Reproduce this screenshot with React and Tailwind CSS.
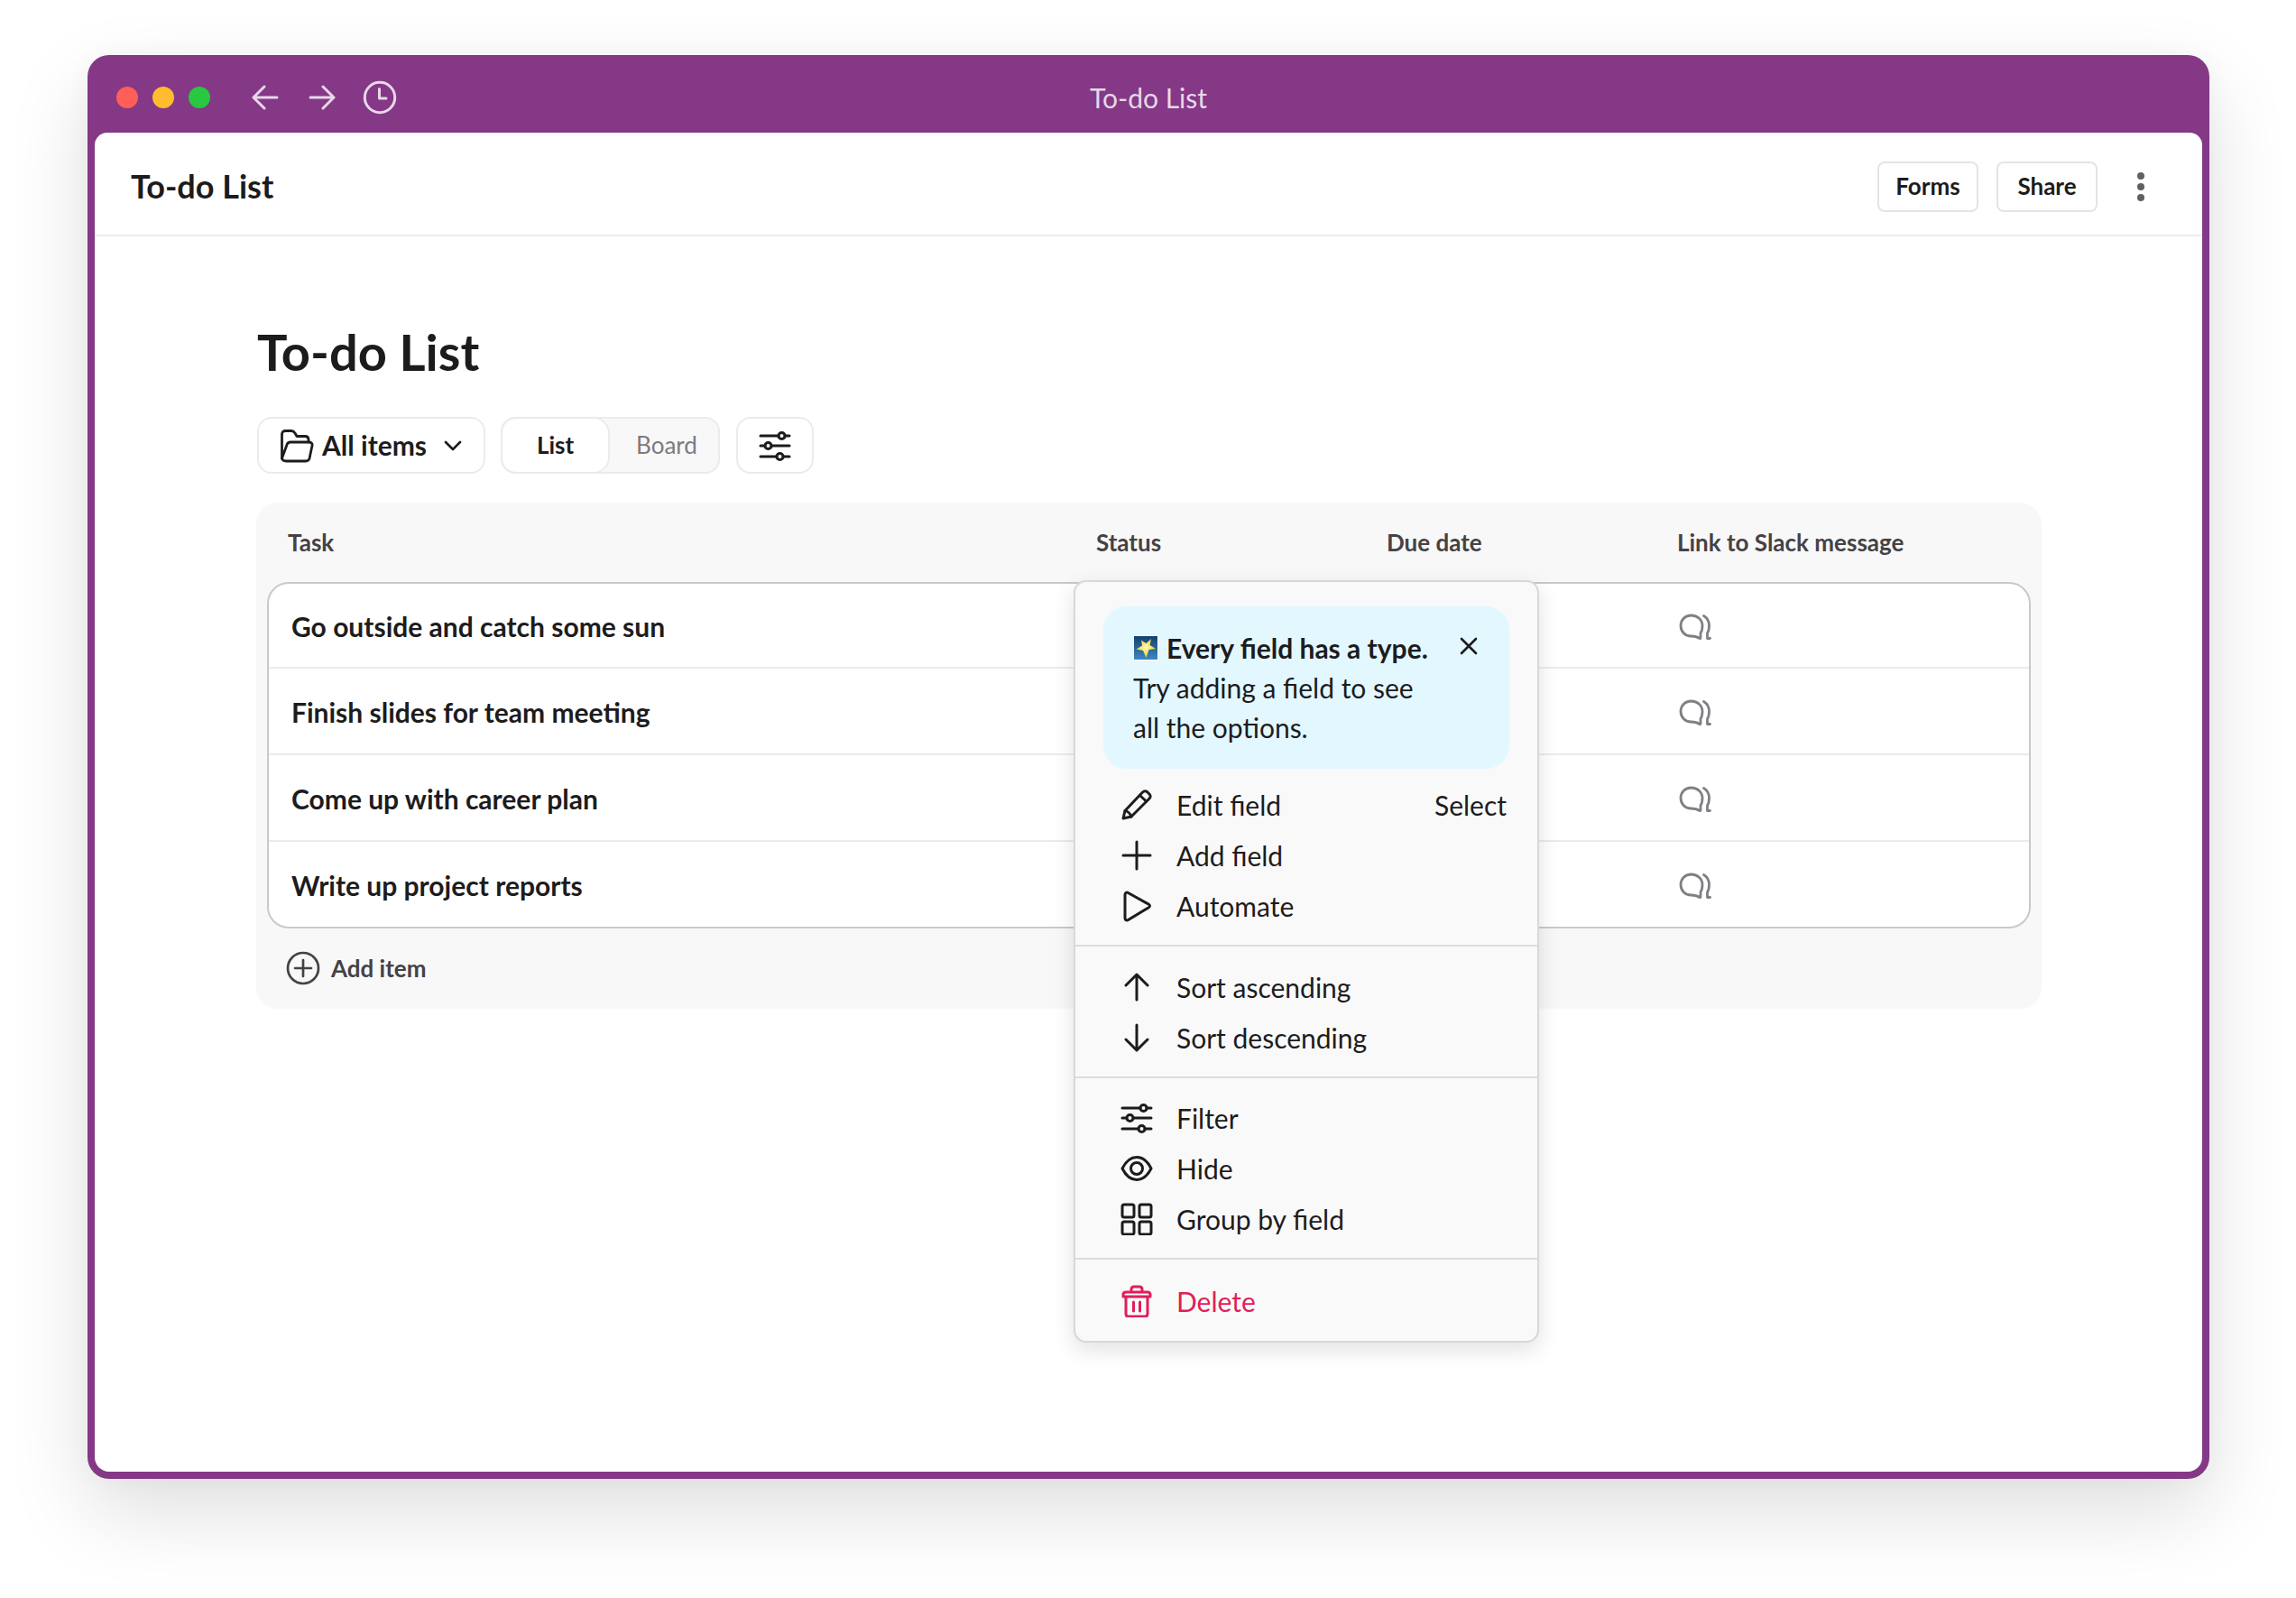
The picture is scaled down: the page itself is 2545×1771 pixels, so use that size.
import React from "react";

const S = ({ children, w = 36, h = 36, vb = "0 0 36 36", c = "#1d1c1d", sw = 3, className = "" }) => (
  <svg width={w} height={h} viewBox={vb} fill="none" stroke={c} strokeWidth={sw} strokeLinecap="round" strokeLinejoin="round" className={`shrink-0 ${className}`}>
    {children}
  </svg>
);

const Sliders = () => (
  <S>
    <path d="M2 7H22M29 7H34M2 18H7M14 18H34M2 30H20M27 30H34" />
    <circle cx="25.5" cy="7" r="3.6" />
    <circle cx="10.5" cy="18" r="3.6" />
    <circle cx="23.5" cy="30" r="3.6" />
  </S>
);

const Thread = () => (
  <S w={37} h={30} vb="0 0 37 30" c="#7f7f84" sw={2.8}>
    <path d="M13.5 2C7 2 2 7 2 13.5S7 25 13.5 25C17 25 20 25.5 23 27.5C23.5 27.8 24 27.5 24 27V21.5C25.5 19.5 26 16.5 26 13.5C26 7 20.5 2 13.5 2Z" />
    <path d="M27.5 2.5C31.5 5 33.5 9 33.5 13.5C33.5 17 33 19.5 31.5 21.5V27.5H34.5" />
  </S>
);

const Star = () => (
  <svg width="28" height="28" viewBox="0 0 28 28" className="shrink-0">
    <defs>
      <linearGradient id="sky" x1="0" y1="0" x2="0" y2="1">
        <stop offset="0" stopColor="#153f6a" />
        <stop offset="1" stopColor="#3d8ac4" />
      </linearGradient>
      <radialGradient id="gold" cx="0.5" cy="0.45" r="0.55">
        <stop offset="0" stopColor="#fffbb0" />
        <stop offset="1" stopColor="#f0c92c" />
      </radialGradient>
    </defs>
    <rect x="0.5" y="0.5" width="27" height="27" fill="url(#sky)" stroke="#fff" />
    <path d="M20 4L18.5 11L25 15L17.5 16L14.5 25L11 17L3.5 15.5L10 11.5L9 5.5L14.5 9Z" fill="url(#gold)" />
  </svg>
);

const Item = ({ icon, label, right, danger }) => (
  <div className={`flex h-[56px] items-center pl-[50px] pr-[34px] ${danger ? "text-[#e01e5a]" : "text-[#1d1c1d]"}`}>
    <span className="flex w-[36px] justify-center">{icon}</span>
    <span className="ml-[26px] flex-1">{label}</span>
    {right && <span>{right}</span>}
  </div>
);

const rows = [
  ["Go outside and catch some sun", "h-[92px]"],
  ["Finish slides for team meeting", "h-[96px] border-t-2 border-[#ebebeb]"],
  ["Come up with career plan", "h-[96px] border-t-2 border-[#ebebeb]"],
  ["Write up project reports", "h-[96px] border-t-2 border-[#ebebeb]"],
];

export default function App() {
  return (
    <div className="h-[1771px] w-[2545px] overflow-hidden bg-white pl-[97px] pt-[61px] font-['Lato',sans-serif] text-[#1d1c1d]">
      <div className="flex h-[1578px] w-[2352px] flex-col rounded-[24px] bg-[#843886] px-[8px] pb-[8px] shadow-[0_36px_90px_rgba(0,0,0,0.13),0_0_30px_rgba(0,0,0,0.03)]">
        <div className="relative flex h-[86px] shrink-0 items-center pl-[24px] pt-[8px]">
          <div className="flex gap-[16px]">
            <span className="h-[24px] w-[24px] rounded-full bg-[#ff5f57]" />
            <span className="h-[24px] w-[24px] rounded-full bg-[#febc2e]" />
            <span className="h-[24px] w-[24px] rounded-full bg-[#28c840]" />
          </div>
          <S w={30} h={28} vb="0 0 30 28" c="#e7d8e8" className="ml-[46px]"><path d="M14 2L2 14L14 26M2 14H28" /></S>
          <S w={30} h={28} vb="0 0 30 28" c="#e7d8e8" className="ml-[33px]"><path d="M16 2L28 14L16 26M2 14H28" /></S>
          <S w={38} h={38} vb="0 0 38 38" c="#e7d8e8" className="ml-[30px]"><circle cx="19" cy="19" r="16.7" /><path d="M18.5 9.5V20H26" /></S>
          <div className="absolute inset-x-0 top-[29px] text-center text-[30px] leading-[36px] text-[#e7d8e8]">To-do List</div>
        </div>

        <div className="flex flex-1 flex-col overflow-hidden rounded-t-[14px] rounded-b-[16px] bg-white">
          <header className="flex h-[115px] shrink-0 items-center border-b-2 border-[#ebebeb] pl-[40px] pr-[63px] pt-[6px]">
            <div className="mb-[2px] flex-1 text-[36px] font-bold leading-[44px]">To-do List</div>
            <button className="flex h-[56px] w-[112px] items-center justify-center rounded-[8px] border-2 border-[#e4e4e4] text-[26px] font-bold">Forms</button>
            <button className="ml-[20px] flex h-[56px] w-[112px] items-center justify-center rounded-[8px] border-2 border-[#e4e4e4] text-[26px] font-bold">Share</button>
            <div className="ml-[44px] flex w-[9px] flex-col gap-[4px]">
              <span className="h-[8px] w-[8px] rounded-full bg-[#616061]" />
              <span className="h-[8px] w-[8px] rounded-full bg-[#616061]" />
              <span className="h-[8px] w-[8px] rounded-full bg-[#616061]" />
            </div>
          </header>

          <main className="flex-1 pl-[179px] pr-[178px] pt-[96px]">
            <h1 className="ml-[1px] text-[56px] font-bold leading-[64px]">To-do List</h1>

            <div className="ml-[1px] mt-[40px] flex h-[63px] gap-[17px]">
              <div className="flex w-[253px] items-center rounded-[16px] border-2 border-[#ebebeb] pl-[23px]">
                <S w={38} h={38} vb="0 0 38 38" sw={2.8}>
                  <path d="M2.5 33V6.5C2.5 4 4 2.5 6.5 2.5H13C15 2.5 16 3.5 17 5L19 8.5H28C30.5 8.5 32 10 32 12.5V15" />
                  <path d="M2.5 33C3 35 5 36 7 36H29C31 36 32.5 35 33 33L36 19C36.5 16.5 35 15 33 15H12C10 15 8.5 16 8 18L2.5 33Z" />
                </S>
                <span className="ml-[9px] text-[30px] font-bold">All items</span>
                <S w={22} h={14} vb="0 0 22 14" sw={2.6} className="ml-[18px]"><path d="M3 3L11 11L19 3" /></S>
              </div>
              <div className="flex w-[243px] rounded-[16px] border-2 border-[#ebebeb] bg-[#f8f8f8]">
                <div className="flex w-[117px] items-center justify-center rounded-[16px] bg-white text-[26px] font-bold shadow-[1px_0_0_1px_#ebebeb]">List</div>
                <div className="flex flex-1 items-center justify-center pl-[8px] text-[26px] text-[#7c7a7f]">Board</div>
              </div>
              <div className="ml-[1px] flex w-[86px] items-center justify-center rounded-[16px] border-2 border-[#ebebeb]">
                <Sliders />
              </div>
            </div>

            <section className="relative mt-[32px] h-[560px] rounded-[24px] bg-[#f8f8f8] px-[12px] shadow-[0_1px_2px_rgba(0,0,0,0.03)]">
              <div className="grid h-[88px] grid-cols-[896px_322px_322px_1fr] items-center pl-[23px] text-[26px] font-bold text-[#454245]">
                <div>Task</div>
                <div>Status</div>
                <div>Due date</div>
                <div>Link to Slack message</div>
              </div>

              <div className="overflow-hidden rounded-[24px] border-2 border-[#c9c9cc] bg-white">
                {rows.map(([r, cls]) => (
                  <div key={r} className={`grid grid-cols-[1538px_1fr] items-center pl-[25px] pt-[3px] text-[30px] font-bold ${cls}`}>
                    <div>{r}</div>
                    <Thread />
                  </div>
                ))}
              </div>

              <div className="flex h-[88px] items-center pl-[21px] text-[26px] font-bold text-[#454245]">
                <S w={38} h={38} vb="0 0 38 38" c="#454245" sw={2.7}><circle cx="19" cy="19" r="17" /><path d="M19 10V28M10 19H28" /></S>
                <span className="ml-[12px]">Add item</span>
              </div>

              <div className="absolute left-[906px] top-[86px] w-[516px] rounded-[14px] border-2 border-[#d8d8d8] bg-[#f9f9f9] text-[30px] shadow-[0_8px_24px_rgba(0,0,0,0.12)]">
                <div className="relative ml-[31px] mr-[31px] mt-[27px] h-[180px] rounded-[26px] bg-[#e3f7ff] px-[33px] py-[24px] text-[30px] leading-[44px]">
                  <div className="flex items-center gap-[9px] font-bold"><Star /><span>Every field has a type.</span></div>
                  <div>Try adding a field to see</div>
                  <div>all the options.</div>
                  <div className="absolute left-[395px] top-[34px]">
                    <S w={20} h={20} vb="0 0 20 20" sw={2.6}><path d="M2 2L18 18M18 2L2 18" /></S>
                  </div>
                </div>
                <div className="pb-[15px] pt-[12px]">
                  <Item label="Edit field" right="Select" icon={<S><path d="M3 33L5 24.5L24.5 4C26 2.5 28 2.5 29.5 3.5L32 6C33.5 7.5 33.5 9.5 32 11L12 31L3 33Z" /><path d="M5 24.5C8 25 11 28 12 31M21.5 7.5L28.5 14" /></S>} />
                  <Item label="Add field" icon={<S><path d="M18 3V33M3 18H33" /></S>} />
                  <Item label="Automate" icon={<S><path d="M5 5.5C5 3.5 7 2.5 8.5 3.5L31 16C33 17.2 33 19 31 20L8.5 33.5C7 34.5 5 33.5 5 31.5Z" /></S>} />
                </div>
                <div className="border-t-2 border-[#dcdcdc] pb-[15px] pt-[17px]">
                  <Item label="Sort ascending" icon={<S><path d="M18 32V4M6 16L18 4L30 16" /></S>} />
                  <Item label="Sort descending" icon={<S><path d="M18 4V32M6 20L18 32L30 20" /></S>} />
                </div>
                <div className="border-t-2 border-[#dcdcdc] pb-[15px] pt-[16px]">
                  <Item label="Filter" icon={<Sliders />} />
                  <Item label="Hide" icon={<S><path d="M2 18C6 10 11 5.5 18 5.5S30 10 34 18C30 26 25 30.5 18 30.5S6 26 2 18Z" /><circle cx="18" cy="18" r="6.5" /></S>} />
                  <Item label="Group by field" icon={<S><rect x="2" y="2" width="13" height="14" rx="2" /><rect x="21" y="2" width="13" height="14" rx="2" /><rect x="2" y="21" width="13" height="14" rx="2" /><rect x="21" y="21" width="13" height="14" rx="2" /></S>} />
                </div>
                <div className="border-t-2 border-[#dcdcdc] pb-[16px] pt-[18px]">
                  <Item danger label="Delete" icon={<S c="#e01e5a"><path d="M3 11C3 8.5 4 8 6 8H30C32 8 33 8.5 33 11V13H3ZM6 13V32C6 34 7 35 9 35H27C29 35 30 34 30 32V13M12 8V5C12 3 13 2 15 2H21C23 2 24 3 24 5V8M14.5 19V29M21.5 19V29" /></S>} />
                </div>
              </div>
            </section>
          </main>
        </div>
      </div>
    </div>
  );
}
